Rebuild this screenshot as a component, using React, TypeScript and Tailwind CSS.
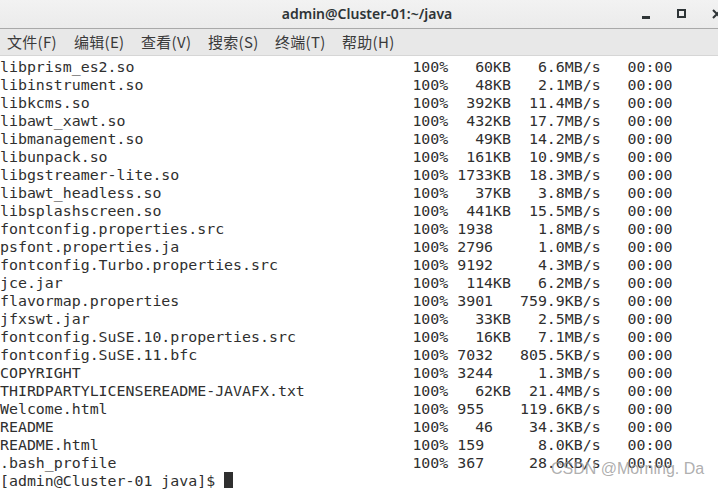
import React from "react";

const rows: [string, string, string][] = [
  ["libprism_es2.so", "  60KB", "6.6MB/s"],
  ["libinstrument.so", "  48KB", "2.1MB/s"],
  ["libkcms.so", " 392KB", "11.4MB/s"],
  ["libawt_xawt.so", " 432KB", "17.7MB/s"],
  ["libmanagement.so", "  49KB", "14.2MB/s"],
  ["libunpack.so", " 161KB", "10.9MB/s"],
  ["libgstreamer-lite.so", "1733KB", "18.3MB/s"],
  ["libawt_headless.so", "  37KB", "3.8MB/s"],
  ["libsplashscreen.so", " 441KB", "15.5MB/s"],
  ["fontconfig.properties.src", "1938  ", "1.8MB/s"],
  ["psfont.properties.ja", "2796  ", "1.0MB/s"],
  ["fontconfig.Turbo.properties.src", "9192  ", "4.3MB/s"],
  ["jce.jar", " 114KB", "6.2MB/s"],
  ["flavormap.properties", "3901  ", "759.9KB/s"],
  ["jfxswt.jar", "  33KB", "2.5MB/s"],
  ["fontconfig.SuSE.10.properties.src", "  16KB", "7.1MB/s"],
  ["fontconfig.SuSE.11.bfc", "7032  ", "805.5KB/s"],
  ["COPYRIGHT", "3244  ", "1.3MB/s"],
  ["THIRDPARTYLICENSEREADME-JAVAFX.txt", "  62KB", "21.4MB/s"],
  ["Welcome.html", "955   ", "119.6KB/s"],
  ["README", "  46  ", "34.3KB/s"],
  ["README.html", "159   ", "8.0KB/s"],
  [".bash_profile", "367   ", "28.6KB/s"],
];

const menus = ["文件(F)", "编辑(E)", "查看(V)", "搜索(S)", "终端(T)", "帮助(H)"];

export default function App() {
  const lines = rows.map(
    ([n, s, sp]) => n.padEnd(46, " ") + "100% " + s + " " + sp.padStart(9, " ") + "   00:00"
  );
  return (
    <div className="relative w-[718px] h-[490px] overflow-hidden bg-white">
      {/* Title bar */}
      <div className="relative h-[29px] bg-gradient-to-b from-[#f2f2f2] to-[#ebebeb] border-b border-[#a9a9a9] flex items-center justify-center pl-[16px]">
        <span
          className="text-[14px] font-semibold text-[#2e3436] -mt-[1px]"
          style={{ fontFamily: '"Noto Sans", "Open Sans", sans-serif' }}
        >
          admin@Cluster-01:~/java
        </span>
        <div className="absolute right-0 top-0 h-full flex items-center">
          <div className="w-[8px] h-[3px] bg-[#2e3436] mt-[6px] mr-[27px]" />
          <div className="w-[9px] h-[9px] border-2 border-[#2e3436] mr-[26px] -mt-[1px]" />
          <svg width="6" height="10" viewBox="0 0 6 10" className="-mt-[1px]">
            <path d="M1 1 L9 9 M9 1 L1 9" stroke="#2e3436" strokeWidth="2" />
          </svg>
        </div>
      </div>
      {/* Menu bar */}
      <div
        className="h-[27px] bg-[#e8e8e8] border-b border-[#d6d6d6] flex items-center pl-[7px] gap-[16px] text-[15px] text-[#3a3a3a]"
        style={{ fontFamily: '"Noto Sans CJK SC", "Noto Sans", sans-serif' }}
      >
        {menus.map((m) => (
          <span key={m} className="leading-none -mt-[1px] w-[51px] shrink-0 whitespace-nowrap tracking-[0.3px]">
            {m}
          </span>
        ))}
      </div>
      {/* Terminal */}
      <div
        className="pt-[2px] text-[14.9px] leading-[18px] text-[#2f2f2f] whitespace-pre"
        style={{ fontFamily: '"DejaVu Sans Mono", monospace' }}
      >
        {lines.map((l, i) => (
          <div key={i}>{l}</div>
        ))}
        <div className="flex items-center h-[18px]">
          <span>[admin@Cluster-01 java]$ </span>
          <span className="inline-block w-[9px] h-[16px] bg-[#2f2f2f] -mt-[2px]" />
        </div>
      </div>
      {/* Watermark */}
      <div
        className="absolute left-[551px] top-[457px] text-[16px] text-[#9a9a9a]/80 whitespace-nowrap"
        style={{ fontFamily: '"Liberation Sans", Arial, sans-serif' }}
      >
        CSDN @Morning. Da
      </div>
    </div>
  );
}
